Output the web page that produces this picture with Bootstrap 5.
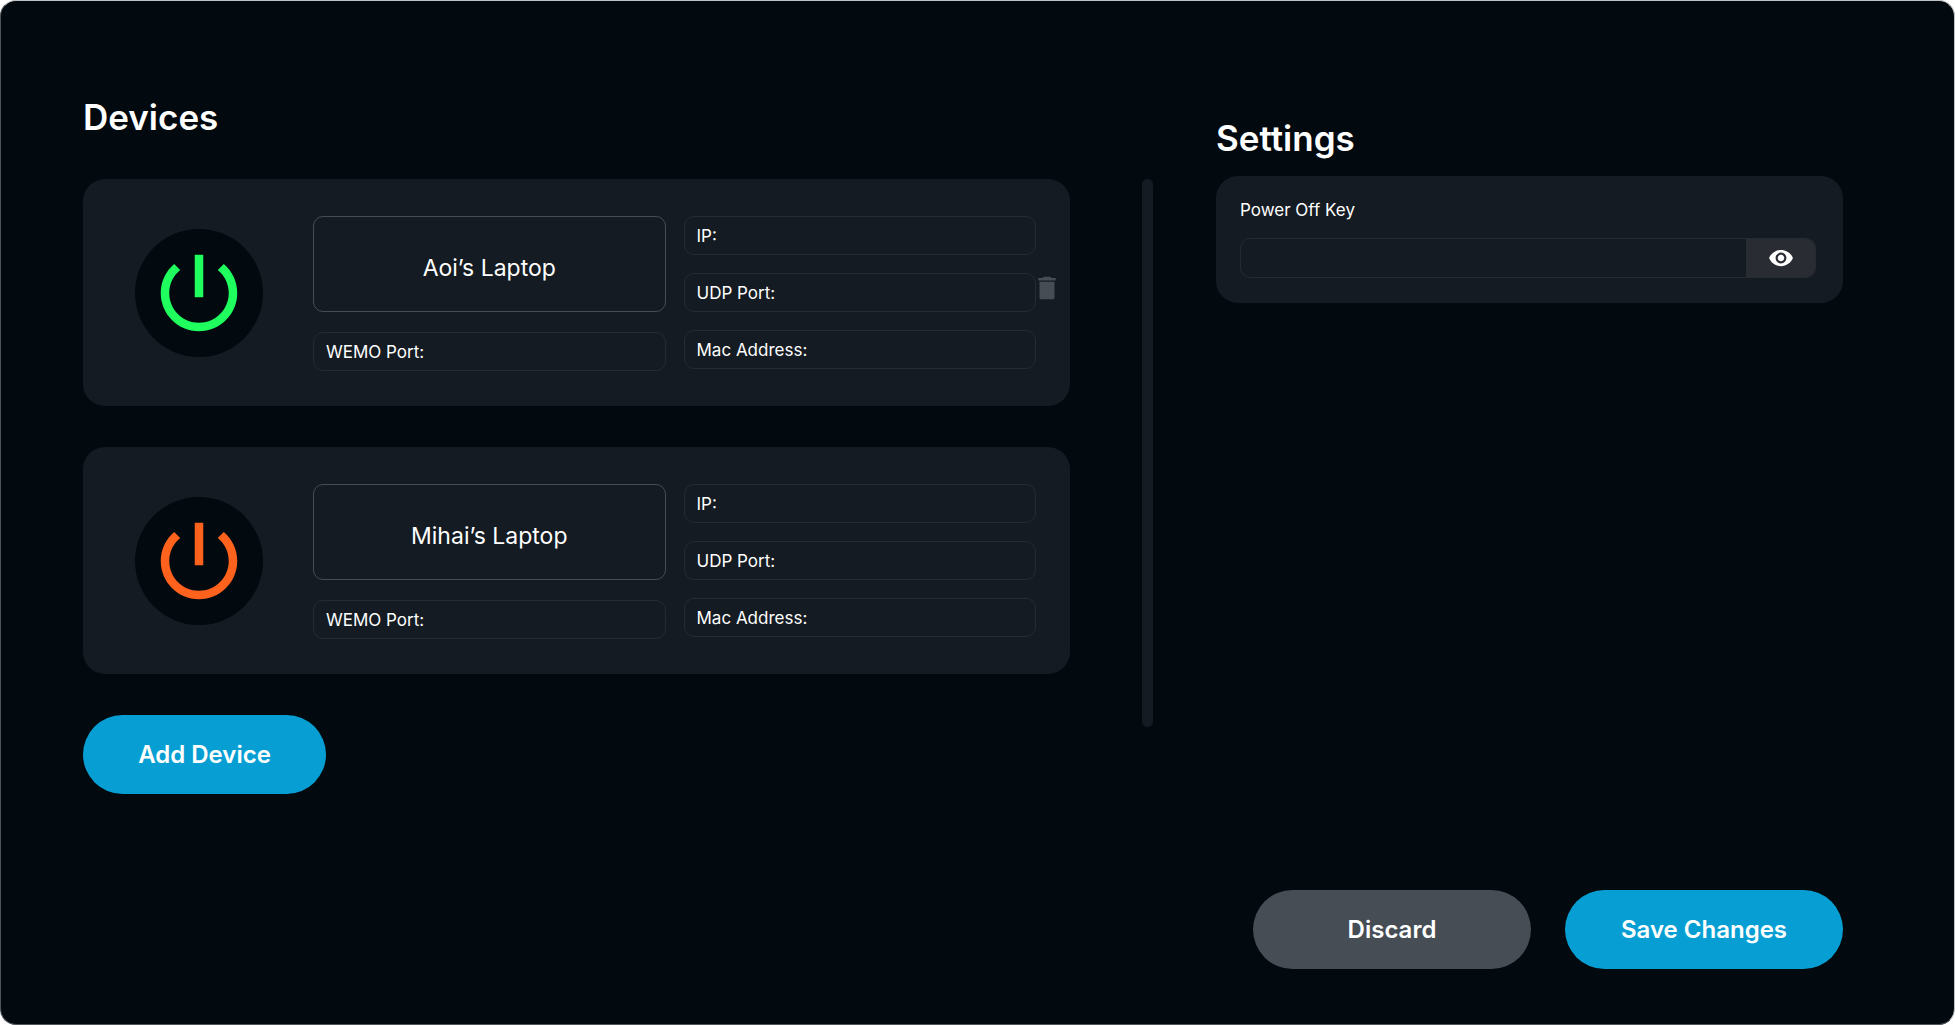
<!DOCTYPE html>
<html lang="en">
<head>
<meta charset="utf-8">
<meta name="viewport" content="width=device-width, initial-scale=1">
<title>Devices</title>
<link href="https://cdn.jsdelivr.net/npm/bootstrap@5.3.0/dist/css/bootstrap.min.css" rel="stylesheet">
<style>
  :root { --ink: #02090f; --panel: #151b22; --line: #262b32; --slate: #464d54; --sky: #079fd3; }
  body { background: #fff; color: #fff; font-family: Inter, "Open Sans", sans-serif; }
  .app-frame { min-height: 100vh; background: var(--ink); border: 1px solid #50555a; border-top-color: #c0c2c3; border-right-color: #c0c2c3; border-radius: 16px; padding: 95px 111px 55px 82px; }
  .devices-pane { flex: 987 1 0; min-width: 0; }
  .settings-pane { flex: 627 1 0; min-width: 0; padding-top: 21px; }
  .pane-divider { flex: 0 0 11px; height: 548px; margin: 83px 63px 0 72px; border-radius: 6px; background: var(--panel); }
  .pane-title { font-size: 35px; line-height: 42px; font-weight: 600; }
  .devices-pane .pane-title { margin-bottom: 41px; }
  .settings-pane .pane-title { margin-bottom: 17px; }
  .panel { background: var(--panel); border-radius: 22px; }
  .device { padding: 37px 14px 35px 52px; margin-bottom: 41px; }
  .power { width: 128px; height: 128px; border: 0; border-radius: 50%; background: var(--ink); margin: 0 50px 2px 0; flex: none; }
  .power.on { color: #1fff5e; }
  .power.off { color: #ff621c; }
  .fields { flex: 1 1 0; min-width: 0; display: grid; grid-template-columns: repeat(2, minmax(0, 1fr)); column-gap: 18px; }
  .stack-a { gap: 20px; }
  .stack-b { gap: 18px; }
  .field-box { height: 39px; border: 1px solid var(--line); border-radius: 10px; padding: 0 12px; font-size: 17px; line-height: 24px; }
  .field-box label { white-space: nowrap; }
  .field-box input, .key-box input { width: 0; background: transparent; border: 0; color: #fff; outline: 0; }
  .device-name { width: 100%; height: 96px; background: transparent; border: 1px solid var(--slate); border-radius: 10px; color: #fff; font-size: 23px; text-align: center; padding: 8px 12px 0; }
  .trash { width: 30px; height: 30px; margin: 0 -6px 12px -4px; padding: 0; border: 0; background: none; color: var(--slate); flex: none; }
  .no-trash { width: 20px; flex: none; }
  .pill { height: 79px; border: 0; border-radius: 40px; color: #fff; font-size: 24px; font-weight: 600; }
  .pill-sky { background: var(--sky); }
  .pill-slate { background: var(--slate); }
  .add { width: 243px; }
  .actions { gap: 34px; padding-left: 37px; padding-top: 40px; }
  .key-panel { padding: 21px 27px 25px 24px; }
  .key-panel label { font-size: 17px; line-height: 26px; margin-bottom: 15px; }
  .key-box { height: 40px; border: 1px solid var(--line); border-radius: 10px; overflow: hidden; }
  .reveal { width: 69px; border: 0; background: #2a2c34; color: #fff; }
</style>
</head>
<body>
<main class="app-frame d-flex flex-column flex-lg-row">
  <section class="devices-pane">
    <h1 class="pane-title">Devices</h1>

    <article class="panel device d-flex align-items-center">
      <button class="power on d-flex align-items-center justify-content-center p-0" type="button" aria-label="Power">
        <svg width="102" height="102" viewBox="0 0 24 24" fill="currentColor"><path d="M13 3h-2v10h2V3zm4.83 2.17l-1.42 1.42C17.99 7.86 19 9.81 19 12c0 3.87-3.13 7-7 7s-7-3.13-7-7c0-2.19 1.01-4.14 2.58-5.42L6.17 5.17C4.23 6.82 3 9.26 3 12c0 4.97 4.03 9 9 9s9-4.03 9-9c0-2.74-1.23-5.18-3.17-6.83z"/></svg>
      </button>
      <div class="fields">
        <div class="stack-a d-flex flex-column">
          <input class="device-name" type="text" aria-label="Device name" value="Aoi’s Laptop">
          <div class="field-box d-flex align-items-center"><label for="wemo1">WEMO Port:</label><input class="flex-grow-1" id="wemo1" type="text"></div>
        </div>
        <div class="stack-b d-flex flex-column">
          <div class="field-box d-flex align-items-center"><label for="ip1">IP:</label><input class="flex-grow-1" id="ip1" type="text"></div>
          <div class="field-box d-flex align-items-center"><label for="udp1">UDP Port:</label><input class="flex-grow-1" id="udp1" type="text"></div>
          <div class="field-box d-flex align-items-center"><label for="mac1">Mac Address:</label><input class="flex-grow-1" id="mac1" type="text"></div>
        </div>
      </div>
      <button class="trash d-flex" type="button" aria-label="Delete device">
        <svg width="30" height="30" viewBox="0 0 24 24" fill="currentColor"><path d="M6 7v12.700q0 1.300 1.300 1.300h9.400q1.300 0 1.300-1.300V7zM19 4h-3.500l-1-1h-5l-1 1H5v2h14z"/></svg>
      </button>
    </article>

    <article class="panel device d-flex align-items-center">
      <button class="power off d-flex align-items-center justify-content-center p-0" type="button" aria-label="Power">
        <svg width="102" height="102" viewBox="0 0 24 24" fill="currentColor"><path d="M13 3h-2v10h2V3zm4.83 2.17l-1.42 1.42C17.99 7.86 19 9.81 19 12c0 3.87-3.13 7-7 7s-7-3.13-7-7c0-2.19 1.01-4.14 2.58-5.42L6.17 5.17C4.23 6.82 3 9.26 3 12c0 4.97 4.03 9 9 9s9-4.03 9-9c0-2.74-1.23-5.18-3.17-6.83z"/></svg>
      </button>
      <div class="fields">
        <div class="stack-a d-flex flex-column">
          <input class="device-name" type="text" aria-label="Device name" value="Mihai’s Laptop">
          <div class="field-box d-flex align-items-center"><label for="wemo2">WEMO Port:</label><input class="flex-grow-1" id="wemo2" type="text"></div>
        </div>
        <div class="stack-b d-flex flex-column">
          <div class="field-box d-flex align-items-center"><label for="ip2">IP:</label><input class="flex-grow-1" id="ip2" type="text"></div>
          <div class="field-box d-flex align-items-center"><label for="udp2">UDP Port:</label><input class="flex-grow-1" id="udp2" type="text"></div>
          <div class="field-box d-flex align-items-center"><label for="mac2">Mac Address:</label><input class="flex-grow-1" id="mac2" type="text"></div>
        </div>
      </div>
      <div class="no-trash"></div>
    </article>

    <button class="pill pill-sky add" type="button">Add Device</button>
  </section>

  <div class="pane-divider d-none d-lg-block"></div>

  <section class="settings-pane d-flex flex-column">
    <h2 class="pane-title">Settings</h2>
    <div class="panel key-panel">
      <label class="d-block" for="key">Power Off Key</label>
      <div class="key-box d-flex">
        <input class="flex-grow-1 px-3" id="key" type="password">
        <button class="reveal d-flex align-items-center justify-content-center p-0" type="button" aria-label="Show key">
          <svg width="26" height="26" viewBox="0 0 24 24" fill="currentColor"><path d="M12 4.500C7 4.500 2.730 7.610 1 12c1.730 4.390 6 7.500 11 7.500s9.270-3.110 11-7.500c-1.730-4.390-6-7.500-11-7.500zM12 17c-2.760 0-5-2.240-5-5s2.240-5 5-5 5 2.240 5 5-2.240 5-5 5zm0-8c-1.660 0-3 1.340-3 3s1.340 3 3 3 3-1.340 3-3-1.340-3-3-3z"/></svg>
        </button>
      </div>
    </div>
    <div class="actions d-flex mt-auto">
      <button class="pill pill-slate w-100" type="button">Discard</button>
      <button class="pill pill-sky w-100" type="button">Save Changes</button>
    </div>
  </section>
</main>
<script src="https://cdn.jsdelivr.net/npm/bootstrap@5.3.0/dist/js/bootstrap.bundle.min.js"></script>
</body>
</html>
